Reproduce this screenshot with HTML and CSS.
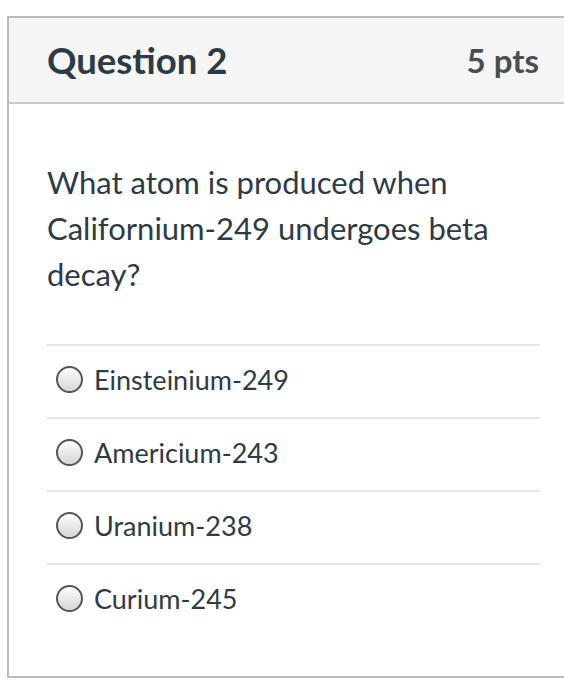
FILE: index.html
```
<!DOCTYPE html>
<html lang="en">
<head>
  <meta charset="UTF-8" />
  <title>Question 2</title>
  <link rel="stylesheet" href="styles.css">
</head>
<body>
  <div class="card">
    <div class="card-header">
      <h2 class="title">Question 2</h2>
      <span class="points">5 pts</span>
    </div>
    <div class="card-body">
      <p class="question">What atom is produced when Californium-249 undergoes beta decay?</p>
      <ul class="answers">
        <li class="answer"><span class="radio"></span>Einsteinium-249</li>
        <li class="answer"><span class="radio"></span>Americium-243</li>
        <li class="answer"><span class="radio"></span>Uranium-238</li>
        <li class="answer"><span class="radio"></span>Curium-245</li>
      </ul>
    </div>
  </div>
</body>
</html>
```

FILE: styles.css
```
html, body {
  margin: 0;
  padding: 0;
  background: #fff;
  font-family: Lato, 'Liberation Sans', sans-serif;
  color: #2d3b45;
  overflow: hidden;
}

body {
  padding: 16px 0 0 7px;
}

.card {
  width: 590px;
  height: 662px;
  border: 2px solid #b9bcbf;
  box-sizing: border-box;
}

.card-header {
  display: flex;
  justify-content: space-between;
  align-items: center;
  height: 84px;
  padding: 0 56px 0 38px;
  background: #f5f5f5;
  border-bottom: 2px solid #c7cacd;
}

.title {
  margin: 0;
  font-size: 36.5px;
  font-weight: 700;
  color: #2d3b45;
}

.points {
  font-size: 33px;
  font-weight: 700;
  color: #4a4f54;
}

.card-body {
  padding: 55px 0 0 38px;
  width: 493px;
}

.question {
  margin: 0 0 47px;
  font-size: 31px;
  line-height: 46px;
}

.answers {
  list-style: none;
  margin: 0;
  padding: 0;
}

.answer {
  display: flex;
  align-items: center;
  gap: 11px;
  height: 71px;
  padding-left: 9px;
  padding-bottom: 4px;
  box-sizing: border-box;
  height: 73px;
  border-top: 2px solid #e3e5e7;
  font-size: 27px;
  color: #2d3b45;
}

.radio {
  width: 23px;
  height: 23px;
  border: 2px solid #555;
  border-radius: 50%;
  background: linear-gradient(#fdfdfd, #d6d6d6);
}
```
